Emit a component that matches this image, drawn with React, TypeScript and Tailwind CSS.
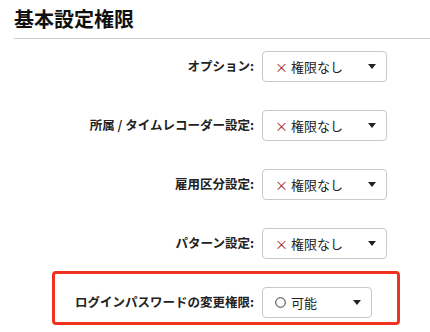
import { type ReactNode } from 'react';

const font = { fontFamily: '"Noto Sans CJK JP", "Noto Sans", sans-serif' };

function Caret() {
  return (
    <svg width="8" height="5" viewBox="0 0 8 5" className="shrink-0">
      <path d="M0 0 H8 L4 5 Z" fill="#222" />
    </svg>
  );
}

function SelectBox({ mark, text, width }: { mark: ReactNode; text: string; width: string }) {
  return (
    <div className={`${width} h-[31px] flex items-center border border-[#c8c8c8] rounded-[4px] bg-white pl-[12px] pr-[10px]`}>
      <span className="w-[16px] flex items-center">{mark}</span>
      <span className="flex-1 text-[13px] text-[#222]">{text}</span>
      <Caret />
    </div>
  );
}

const Cross = <span className="text-[13px] text-[#9b1c1c] leading-none">×</span>;
const Circle = (
  <svg width="11" height="11" viewBox="0 0 11 11">
    <circle cx="5.5" cy="5.5" r="4.8" fill="none" stroke="#333" strokeWidth="1" />
  </svg>
);

const rows = ['オプション:', '所属 / タイムレコーダー設定:', '雇用区分設定:', 'パターン設定:'];

export default function App() {
  return (
    <div className="w-[430px] h-[332px] bg-white overflow-hidden" style={font}>
      <div className="ml-[14px] h-[39px] border-b border-[#d0d0d0] pt-[6px]">
        <h1 className="text-[20px] font-bold leading-[25px] text-[#111]">基本設定権限</h1>
      </div>

      <div className="flex flex-col gap-[28px] pt-[12px]">
        {rows.map((label) => (
          <div key={label} className="flex items-center">
            <div className="w-[254px] text-right text-[12.5px] font-bold text-[#222]">{label}</div>
            <div className="ml-[8px]">
              <SelectBox mark={Cross} text="権限なし" width="w-[125px]" />
            </div>
          </div>
        ))}
      </div>

      <div className="ml-[52px] mt-[12px] w-[348px] border-[3px] border-[#f0321e] rounded-[4px] pt-[13px] pb-[4px]">
        <div className="flex items-center">
          <div className="w-[199px] text-right text-[12.5px] font-bold text-[#222]">ログインパスワードの変更権限:</div>
          <div className="ml-[8px]">
            <SelectBox mark={Circle} text="可能" width="w-[110px]" />
          </div>
        </div>
      </div>
    </div>
  );
}
